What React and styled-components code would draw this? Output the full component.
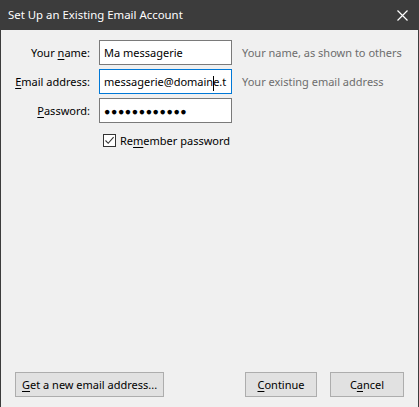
import React from "react";
import styled, { createGlobalStyle } from "styled-components";

const Global = createGlobalStyle`
  html, body {
    margin: 0;
    padding: 0;
    background: #f0f0f0;
  }
  body {
    font-family: "Noto Sans", "Open Sans", sans-serif;
    font-size: 11px;
    color: #000;
  }
`;

const Window = styled.div`
  height: 407px;
  display: flex;
  flex-direction: column;
  border-left: 1px solid #3c3c3c;
  border-right: 1px solid #3c3c3c;
  box-sizing: border-box;
  background: #f0f0f0;
`;

const TitleBar = styled.div`
  height: 30px;
  flex: none;
  display: flex;
  align-items: center;
  justify-content: space-between;
  background: #3c3c3c;
  color: #fff;
  padding: 0 11px 0 8px;
  margin: 0 -1px;
`;

const Title = styled.div`
  font-size: 11.4px;
  padding-bottom: 1px;
`;

const Body = styled.div`
  flex: 1;
  display: flex;
  flex-direction: column;
  justify-content: space-between;
  padding: 10px 14px 10px 14px;
`;

const Form = styled.div`
  display: grid;
  grid-template-columns: 75px 133px auto;
  column-gap: 9px;
  row-gap: 4px;
  align-items: center;
`;

const Label = styled.label`
  text-align: right;
  white-space: nowrap;
`;

const Field = styled.div`
  height: 25px;
  box-sizing: border-box;
  border: 1px solid ${(p) => (p.$focused ? "#0078d7" : "#7a7a7a")};
  background: #fff;
  padding: 0 4px;
  line-height: 23px;
  overflow: hidden;
  white-space: nowrap;
`;

const Dots = styled.span`
  font-size: 10.5px;
  letter-spacing: 0.6px;
`;

const Caret = styled.span`
  display: inline-block;
  width: 1px;
  height: 15px;
  margin: 0 -0.5px;
  background: #000;
  vertical-align: middle;
`;

const Hint = styled.div`
  color: #6d6d6d;
  white-space: nowrap;
  padding-left: 1px;
`;

const CheckRow = styled.div`
  grid-column: 2 / 4;
  display: flex;
  align-items: center;
  gap: 4px;
  padding: 6px 0 0 4px;
`;

const Box = styled.span`
  width: 13px;
  height: 13px;
  box-sizing: border-box;
  border: 1px solid #333;
  background: #fff;
  display: flex;
  align-items: center;
  justify-content: center;
`;

const Footer = styled.div`
  display: flex;
  align-items: center;
  gap: 13px;
`;

const Button = styled.button`
  height: 25px;
  min-width: ${(p) => p.$w || 72}px;
  padding: 0 6px;
  box-sizing: border-box;
  border: 1px solid #adadad;
  background: #e1e1e1;
  font-family: inherit;
  font-size: 11px;
  color: #000;
  &:first-child {
    margin-right: auto;
  }
`;

const U = styled.span`
  text-decoration: underline;
  text-underline-offset: 2px;
`;

export default function App() {
  return (
    <>
      <Global />
      <Window>
        <TitleBar>
          <Title>Set Up an Existing Email Account</Title>
          <svg width="11" height="11" viewBox="0 0 11 11">
            <path d="M0.5 0.5 L10.5 10.5 M10.5 0.5 L0.5 10.5" stroke="#fff" strokeWidth="1.2" />
          </svg>
        </TitleBar>
        <Body>
          <Form>
            <Label>
              Your <U>n</U>ame:
            </Label>
            <Field>Ma messagerie</Field>
            <Hint>Your name, as shown to others</Hint>

            <Label>
              <U>E</U>mail address:
            </Label>
            <Field $focused>
              messagerie@domain
              <Caret />
              e.t
            </Field>
            <Hint>Your existing email address</Hint>

            <Label>
              <U>P</U>assword:
            </Label>
            <Field>
              <Dots>●●●●●●●●●●●●</Dots>
            </Field>
            <span />

            <CheckRow>
              <Box>
                <svg width="11" height="11" viewBox="0 0 11 11">
                  <path d="M1.5 5.5 L4.2 8.3 L9.6 2.2" fill="none" stroke="#333" strokeWidth="1.1" />
                </svg>
              </Box>
              <span>
                Re<U>m</U>ember password
              </span>
            </CheckRow>
          </Form>
          <Footer>
            <Button $w={149}>
              <U>G</U>et a new email address...
            </Button>
            <Button $w={72}>
              <U>C</U>ontinue
            </Button>
            <Button $w={74}>
              C<U>a</U>ncel
            </Button>
          </Footer>
        </Body>
      </Window>
    </>
  );
}
